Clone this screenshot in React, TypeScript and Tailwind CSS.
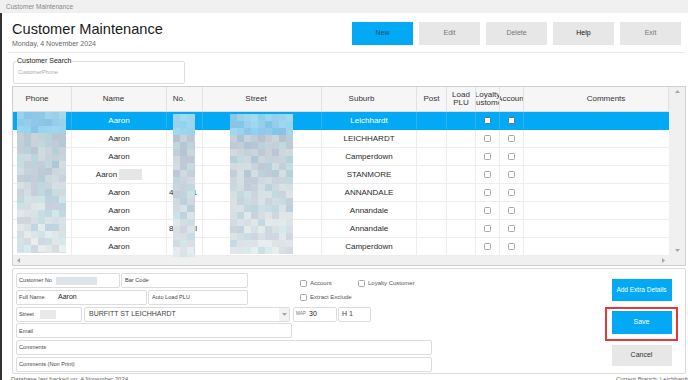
import React from 'react'

// seeded random so the blurred blocks look the same every run
function rng(seed: number) {
  let s = seed
  return () => {
    s = (s * 9301 + 49297) % 233280
    return s / 233280
  }
}

function Mosaic({ w, h, seed, blueRows = 18 }: { w: number; h: number; seed: number; blueRows?: number }) {
  const size = 7
  const rand = rng(seed)
  const nc = Math.ceil(w / size)
  const nr = Math.ceil(h / size)
  const cells: string[] = []
  for (let r = 0; r < nr; r++) {
    for (let c = 0; c < nc; c++) {
      const y = r * size
      let base: number[]
      if (y < blueRows) base = [150, 206, 236]
      else {
        const t = y / h
        base = [188 + 36 * t, 200 + 30 * t, 212 + 22 * t]
      }
      const n = (rand() - 0.5) * 24
      const tint = rand() < 0.3 ? -14 : 0
      const cl = (v: number) => Math.max(0, Math.min(255, Math.round(v)))
      cells.push(`rgb(${cl(base[0] + n + tint)},${cl(base[1] + n)},${cl(base[2] + n * 0.5)})`)
    }
  }
  return (
    <div
      className="grid overflow-hidden blur-[0.7px]"
      style={{ width: w, height: h, gridTemplateColumns: `repeat(${nc}, ${size}px)` }}
    >
      {cells.map((bg, i) => (
        <div key={i} className="h-[7px]" style={{ background: bg }} />
      ))}
    </div>
  )
}

const columns = [
  { label: ['Phone'], cls: 'pr-[10px]' },
  { label: ['Name'], cls: 'pr-[11px]' },
  { label: ['No.'], cls: 'pr-[11px]' },
  { label: ['Street'], cls: 'pr-[12px]' },
  { label: ['Suburb'], cls: 'pr-[15px]' },
  { label: ['Post'], cls: '' },
  { label: ['Load', 'PLU'], cls: '' },
  { label: ['Loyalty', 'Customer'], cls: '' },
  { label: ['Account'], cls: '' },
  { label: ['Comments'], cls: 'pl-[20px]' },
]

const rows = [
  { suburb: 'Leichhardt', selected: true },
  { suburb: 'LEICHHARDT' },
  { suburb: 'Camperdown' },
  { suburb: 'STANMORE', extra: true },
  { suburb: 'ANNANDALE', no: ['4', '1'] },
  { suburb: 'Annandale' },
  { suburb: 'Annandale', no: ['8', 'l'] },
  { suburb: 'Camperdown' },
]

const gridCols = 'grid grid-cols-[59px_95px_36px_119px_95px_30px_29px_24px_24px_145px]'

function Check({ on }: { on?: boolean }) {
  return (
    <span
      className={
        on
          ? 'w-[7px] h-[7px] rounded-[1.5px] border border-[#5d7282] bg-white'
          : 'w-[7px] h-[7px] rounded-[1.5px] border border-[#a8a8a8] bg-white'
      }
    />
  )
}

function Arrow({ dir }: { dir: 'up' | 'down' | 'left' | 'right' }) {
  const pts = {
    up: '0,4 2.5,1 5,4',
    down: '0,1 2.5,4 5,1',
    left: '4,0 1,2.5 4,5',
    right: '1,0 4,2.5 1,5',
  }[dir]
  return (
    <svg width="5" height="5" viewBox="0 0 5 5">
      <polygon points={pts} fill="#a6a6a6" />
    </svg>
  )
}

function Field({ className = '', children }: { className?: string; children?: React.ReactNode }) {
  return (
    <div
      className={`h-[15px] shrink-0 border border-[#dcdcdc] rounded-[2px] bg-white flex items-center pl-[2px] text-[5.6px] text-[#444] ${className}`}
    >
      {children}
    </div>
  )
}

export default function App() {
  const line = (sel?: boolean) => (sel ? 'border-[#2ab4f2]' : 'border-[#ededed]')

  return (
    <div className="w-[688px] h-[380px] overflow-hidden bg-white flex flex-col font-['Liberation_Sans',Arial,sans-serif]">
      {/* window title bar */}
      <div className="h-[13px] shrink-0 bg-[#f0f0f0] flex items-center pl-[6px] text-[6.5px] text-[#888]">
        Customer Maintenance
      </div>

      <div className="flex-1 border-l-2 border-[#333] flex flex-col min-h-0">
        {/* header */}
        <div className="h-[40px] shrink-0 ml-[6px] mr-[4px] border-b border-[#e8e8e8] flex justify-between pt-[8px] pl-[4px] pr-[3px]">
          <div>
            <div className="text-[14.6px] leading-[17px] text-[#1a1a1a]">Customer Maintenance</div>
            <div className="text-[7px] leading-[9px] mt-[1px] text-[#666]">Monday, 4 November 2024</div>
          </div>
          <div className="flex gap-[6px] mt-[1px] text-[7px]">
            <button className="w-[61px] h-[23px] bg-[#03a9f4] text-[#1f4f78]">New</button>
            <button className="w-[61px] h-[23px] bg-[#e7e7e7] text-[#777]">Edit</button>
            <button className="w-[61px] h-[23px] bg-[#e7e7e7] text-[#777]">Delete</button>
            <button className="w-[61px] h-[23px] bg-[#e7e7e7] text-[#111]">Help</button>
            <button className="w-[61px] h-[23px] bg-[#e7e7e7] text-[#777]">Exit</button>
          </div>
        </div>

        {/* search */}
        <fieldset className="mt-[4px] ml-[11px] w-[172px] border border-[#dedede] rounded-[2px] px-[2px]">
          <legend className="text-[7px] leading-[8px] px-[1px] text-[#222]">Customer Search</legend>
          <div className="h-[18px] pt-[4px] pl-[2px] text-[5.5px] leading-[7px] text-[#aaa]">CustomerPhone</div>
        </fieldset>

        {/* grid */}
        <div className="mt-[2px] ml-[10px] w-[674px] h-[180px] shrink-0 border border-[#cfcfcf] flex flex-col">
          <div className="flex flex-1 min-h-0">
            <div className="w-[656px] flex flex-col">
              <div className={`${gridCols} h-[25px] border-b border-[#dcdcdc] bg-[#f6f6f6] text-[8px] leading-[8px] text-[#333]`}>
                {columns.map((c, i) => (
                  <div
                    key={i}
                    className={`flex flex-col items-center justify-center overflow-hidden border-r border-[#e2e2e2] ${c.cls}`}
                  >
                    {c.label.map((l) => (
                      <span key={l} className="whitespace-nowrap">
                        {l}
                      </span>
                    ))}
                  </div>
                ))}
              </div>

              <div className="relative flex-1">
                {rows.map((r, i) => (
                  <div
                    key={i}
                    className={`${gridCols} h-[18px] border-b text-[8px] ${
                      r.selected ? 'bg-[#03a9f4] text-white border-[#03a9f4]' : 'text-[#2a2a2a] border-[#ededed]'
                    }`}
                  >
                    <div className={`border-r ${line(r.selected)}`} />
                    <div className={`flex items-center justify-center gap-[2px] border-r ${line(r.selected)}`}>
                      <span>Aaron</span>
                      {r.extra && <span className="w-[23px] h-[11px] bg-[#e6e6e6]" />}
                    </div>
                    <div className={`flex items-center pl-[2px] pr-[5px] justify-between border-r ${line(r.selected)}`}>
                      {r.no && (
                        <>
                          <span>{r.no[0]}</span>
                          <span>{r.no[1]}</span>
                        </>
                      )}
                    </div>
                    <div className={`border-r ${line(r.selected)}`} />
                    <div className={`flex items-center justify-center border-r ${line(r.selected)}`}>{r.suburb}</div>
                    <div className={`border-r ${line(r.selected)}`} />
                    <div className={`border-r ${line(r.selected)}`} />
                    <div className={`flex items-center justify-center border-r ${line(r.selected)}`}>
                      <Check on={r.selected} />
                    </div>
                    <div className={`flex items-center justify-center border-r ${line(r.selected)}`}>
                      <Check on={r.selected} />
                    </div>
                    <div />
                  </div>
                ))}

                {/* blurred personal data */}
                <div className="absolute left-[4px] top-0">
                  <Mosaic w={49} h={141} seed={11} />
                </div>
                <div className="absolute left-[160px] top-[2px]">
                  <Mosaic w={22} h={143} seed={37} blueRows={16} />
                </div>
                <div className="absolute left-[217px] top-[2px]">
                  <Mosaic w={63} h={140} seed={73} blueRows={16} />
                </div>
              </div>
            </div>
            <div className="w-[16px] bg-[#f0f0f0] flex flex-col items-center justify-between pt-[2px] pb-[3px]">
              <Arrow dir="up" />
              <Arrow dir="down" />
            </div>
          </div>
          <div className="h-[9px] flex">
            <div className="w-[656px] bg-[#f0f0f0] flex items-center justify-between px-[3px]">
              <Arrow dir="left" />
              <Arrow dir="right" />
            </div>
            <div className="w-[16px] bg-[#f0f0f0]" />
          </div>
        </div>

        {/* detail form */}
        <div className="mt-[2px] ml-[10px] w-[674px] h-[106px] shrink-0 border border-[#dcdcdc] rounded-[2px] flex">
          <div className="flex-1 flex flex-col gap-[1.75px] pt-[4px] pl-[3px]">
            <div className="flex items-start">
              <Field className="w-[104px]">
                <span className="w-[37px]">Customer No</span>
                <span className="w-[41px] h-[8px] bg-[#dfe4ea] blur-[0.5px]" />
              </Field>
              <Field className="w-[127px] ml-[1px] pl-[3px]">Bar Code</Field>
              <div className="flex items-center ml-[52px] mt-[6px] text-[6px] text-[#555]">
                <Check />
                <span className="ml-[3px] w-[48px]">Account</span>
                <Check />
                <span className="ml-[3px]">Loyalty Customer</span>
              </div>
            </div>
            <div className="flex items-start">
              <Field className="w-[131px]">
                <span className="w-[39px]">Full Name</span>
                <span className="text-[7px] text-[#222]">Aaron</span>
              </Field>
              <Field className="w-[100px] ml-[1px] pl-[3px]">Auto Load PLU</Field>
              <div className="flex items-center ml-[52px] mt-[3px] text-[6px] text-[#555]">
                <Check />
                <span className="ml-[3px]">Extract Exclude</span>
              </div>
            </div>
            <div className="flex items-start">
              <Field className="w-[66px]">
                <span className="w-[21px]">Street</span>
                <span className="w-[16px] h-[9px] bg-[#e9e9e9] blur-[0.4px]" />
              </Field>
              <Field className="w-[206px] ml-[2px] pl-[4px] pr-0 text-[7px] text-[#222]">
                <span className="flex-1">BURFITT ST LEICHHARDT</span>
                <span className="w-[10px] h-full bg-[#f3f3f3] flex items-center justify-center">
                  <Arrow dir="down" />
                </span>
              </Field>
              <Field className="w-[44px] ml-[3px]">
                <span className="text-[4.5px] text-[#777] w-[13px]">MAP</span>
                <span className="text-[7px] text-[#222]">30</span>
              </Field>
              <Field className="w-[33px] ml-[1px] pl-[3px] text-[7px] text-[#222]">H 1</Field>
            </div>
            <Field className="w-[276px]">Email</Field>
            <Field className="w-[416px]">Comments</Field>
            <Field className="w-[416px]">Comments (Non Print)</Field>
          </div>

          <div className="w-[73px] mr-[7px] flex flex-col items-center pt-[10px]">
            <button className="w-[60px] h-[22px] bg-[#03a9f4] text-white text-[6.5px]">Add Extra Details</button>
            <div className="mt-[6px] w-[73px] border-2 border-[#e53935] pt-[2px] pb-[5px] flex justify-center">
              <button className="w-[60px] h-[23px] bg-[#03a9f4] text-white text-[7px]">Save</button>
            </div>
            <button className="mt-[4px] w-[60px] h-[21px] bg-[#e7e7e7] text-[#333] text-[7px]">Cancel</button>
          </div>
        </div>

        {/* status line, cut off by the window */}
        <div className="mt-[1px] flex justify-between pl-[9px] text-[6px] leading-[8px] text-[#666] whitespace-nowrap">
          <span>Database last backed up: 4 November 2024</span>
          <span>Current Branch: Leichhardt</span>
        </div>
      </div>
    </div>
  )
}
